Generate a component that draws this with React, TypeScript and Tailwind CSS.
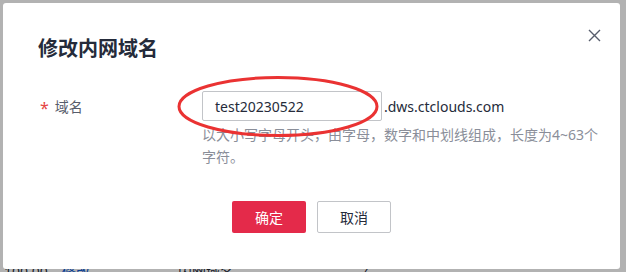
import React from "react";

export default function App() {
  const font = { fontFamily: '"Noto Sans", "Noto Sans CJK SC", sans-serif' };
  return (
    <div className="relative w-[626px] h-[272px] overflow-hidden bg-white" style={font}>
      {/* page behind */}
      <div className="flex items-start h-[272px] pt-[262px] text-[14px] leading-[20px] text-[#252b3a]">
        <span className="ml-[4px] w-[58px]">100.00</span>
        <span className="w-[116px] text-[#0d5bd3]">修改</span>
        <span className="w-[182px]">内网域名</span>
        <span>✓</span>
      </div>
      {/* overlay */}
      <div className="absolute inset-0 bg-[rgba(0,0,0,0.3)]" />
      {/* dialog */}
      <div className="absolute left-[3px] top-[3px] w-[617px] h-[266px] bg-white rounded-[3px] flex flex-col">
        <div className="pl-[35px] pt-[33px] text-[20px] leading-[26px] font-bold text-[#252b3a]">修改内网域名</div>
        <svg className="absolute left-[583px] top-[24px]" width="16" height="16" viewBox="0 0 16 16">
          <path d="M3 3 L14 14 M14 3 L3 14" stroke="#575d6c" strokeWidth="1.4" fill="none" />
        </svg>
        <div className="flex mt-[29px] pl-[37px]">
          <div className="w-[162px] h-[30px] flex items-center text-[14px] text-[#575d6c]">
            <span className="text-[#e54545] text-[16px] mr-[6px] translate-y-[2px]">*</span>
            <span>域名</span>
          </div>
          <div className="flex flex-col">
            <div className="flex items-center">
              <div className="w-[180px] h-[30px] border border-[#c2c4c8] rounded-[2px] px-[12px] flex items-center text-[14px] text-[#252b3a]">
                test20230522
              </div>
              <span className="ml-[2px] text-[14px] text-[#252b3a]">.dws.ctclouds.com</span>
            </div>
            <div className="mt-[3px] w-[400px] text-[14px] leading-[22px] text-[#8a8e99]">
              以大小写字母开头，由字母，数字和中划线组成，长度为4~63个字符。
            </div>
          </div>
        </div>
        <div className="flex justify-center gap-[11px] mt-[33px]">
          <button className="w-[74px] h-[32px] rounded-[2px] bg-[#e42a4a] text-white text-[14px]">确定</button>
          <button className="w-[74px] h-[32px] rounded-[2px] border border-[#c2c4c8] bg-white text-[#252b3a] text-[14px]">取消</button>
        </div>
      </div>
      {/* annotation ellipse */}
      <svg className="absolute left-[176px] top-[75px]" width="204" height="63" viewBox="0 0 204 63">
        <ellipse cx="102" cy="31.5" rx="99" ry="29" fill="none" stroke="#ea3232" strokeWidth="3" />
      </svg>
    </div>
  );
}
